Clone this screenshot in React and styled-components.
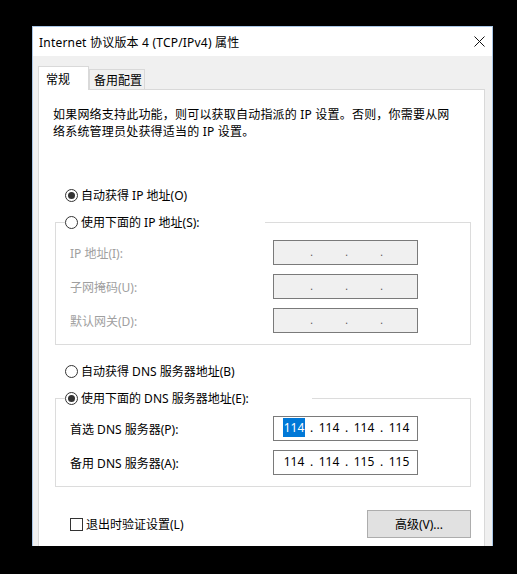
import styled, { createGlobalStyle } from 'styled-components';

const GlobalStyle = createGlobalStyle`
  html, body {
    margin: 0;
    background: #000;
  }
  body {
    font-family: "Noto Sans", "Noto Sans CJK SC", sans-serif;
    font-size: 12px;
    color: #000;
  }
`;

const ipFields = ['IP 地址(I):', '子网掩码(U):', '默认网关(D):'];

const dnsFields = [
  { label: '首选 DNS 服务器(P):', value: ['114', '114', '114', '114'], selected: 0 },
  { label: '备用 DNS 服务器(A):', value: ['114', '114', '115', '115'] },
];

function CloseIcon() {
  return (
    <svg width='11' height='11' viewBox='0 0 11 11'>
      <path d='M0.5 0.5 L10.5 10.5 M10.5 0.5 L0.5 10.5' stroke='#111' strokeWidth='1' fill='none' />
    </svg>
  );
}

function Radio({ checked, children }) {
  return (
    <RadioLabel>
      <RadioCircle $checked={checked} />
      <span>{children}</span>
    </RadioLabel>
  );
}

function IpBox({ value, disabled, selected }) {
  const parts = value || ['', '', '', ''];
  return (
    <Field $disabled={disabled}>
      {parts.map((p, i) => (
        <Segment key={i}>
          {i > 0 && <Dot $disabled={disabled}>.</Dot>}
          <Octet $selected={selected === i}>{p}</Octet>
        </Segment>
      ))}
    </Field>
  );
}

function App() {
  return (
    <Screen>
      <GlobalStyle />
      <Window>
        <TitleBar>
          <Title>Internet 协议版本 4 (TCP/IPv4) 属性</Title>
          <CloseIcon />
        </TitleBar>

        <Body>
          <Tabs>
            <Tab $active>常规</Tab>
            <Tab>备用配置</Tab>
          </Tabs>

          <Panel>
            <Description>
              如果网络支持此功能，则可以获取自动指派的 IP 设置。否则，你需要从网
              <br />
              络系统管理员处获得适当的 IP 设置。
            </Description>

            <Options>
              <OptionRow $top={45}>
                <Radio checked>自动获得 IP 地址(O)</Radio>
              </OptionRow>

              <Group $top={7}>
                <Legend $width={200}>
                  <Radio>使用下面的 IP 地址(S):</Radio>
                </Legend>
                <Rows $bottom={11}>
                  {ipFields.map((label) => (
                    <FieldRow key={label}>
                      <FieldLabel $disabled>{label}</FieldLabel>
                      <IpBox disabled />
                    </FieldRow>
                  ))}
                </Rows>
              </Group>

              <OptionRow $top={16}>
                <Radio>自动获得 DNS 服务器地址(B)</Radio>
              </OptionRow>

              <Group $top={7}>
                <Legend $width={247}>
                  <Radio checked>使用下面的 DNS 服务器地址(E):</Radio>
                </Legend>
                <Rows $bottom={11}>
                  {dnsFields.map((f) => (
                    <FieldRow key={f.label}>
                      <FieldLabel>{f.label}</FieldLabel>
                      <IpBox value={f.value} selected={f.selected} />
                    </FieldRow>
                  ))}
                </Rows>
              </Group>

              <Footer>
                <CheckLabel>
                  <CheckBox />
                  <span>退出时验证设置(L)</span>
                </CheckLabel>
                <Button>高级(V)...</Button>
              </Footer>
            </Options>
          </Panel>
        </Body>
      </Window>
    </Screen>
  );
}

export default App;

const Screen = styled.div`
  width: 517px;
  height: 574px;
  box-sizing: border-box;
  padding: 26px 0 0 32px;
  overflow: hidden;
`;

const Window = styled.div`
  width: 461px;
  height: 520px;
  box-sizing: border-box;
  border: 1px solid #a9c6e6;
  border-bottom: none;
  background: #f0f0f0;
  display: flex;
  flex-direction: column;
  overflow: hidden;
`;

const TitleBar = styled.div`
  height: 29px;
  flex: none;
  background: #fff;
  display: flex;
  align-items: center;
  justify-content: space-between;
  padding: 0 7px 0 6px;
`;

const Title = styled.span`
  letter-spacing: 0.2px;
`;

const Body = styled.div`
  flex: 1;
  display: flex;
  flex-direction: column;
  padding: 10px 7px 0 5px;
  min-height: 0;
`;

const Tabs = styled.div`
  display: flex;
  align-items: flex-end;
  height: 24px;
  margin-bottom: -1px;
  position: relative;
  z-index: 1;
`;

const Tab = styled.div`
  box-sizing: border-box;
  display: flex;
  align-items: center;
  border: 1px solid #d9d9d9;
  border-bottom: none;
  height: ${(p) => (p.$active ? '24px' : '20px')};
  margin-bottom: ${(p) => (p.$active ? '0' : '1px')};
  padding: ${(p) => (p.$active ? '0 18px 0 7px' : '0 2px 0 4px')};
  background: ${(p) => (p.$active ? '#fff' : '#f0f0f0')};
`;

const Panel = styled.div`
  flex: 1;
  background: #fff;
  border: 1px solid #d9d9d9;
  border-bottom: none;
  padding: 16px 0 0 14px;
`;

const Description = styled.div`
  line-height: 17px;
  letter-spacing: 0.2px;
  white-space: nowrap;
`;

const Options = styled.div`
  width: 416px;
  margin-left: 2px;
  display: flex;
  flex-direction: column;
`;

const OptionRow = styled.div`
  margin-top: ${(p) => p.$top}px;
  padding-left: 10px;
  height: 20px;
  display: flex;
  align-items: center;
`;

const RadioLabel = styled.label`
  display: flex;
  align-items: center;
  gap: 3px;
  white-space: nowrap;
`;

const RadioCircle = styled.span`
  box-sizing: border-box;
  width: 13px;
  height: 13px;
  border-radius: 50%;
  border: 1px solid #333;
  background: #fff;
  display: flex;
  align-items: center;
  justify-content: center;

  &::after {
    content: '';
    display: ${(p) => (p.$checked ? 'block' : 'none')};
    width: 7px;
    height: 7px;
    border-radius: 50%;
    background: #333;
  }
`;

const Group = styled.fieldset`
  margin: ${(p) => p.$top}px 0 0;
  padding: 8px 0 0 9px;
  border: 1px solid #dcdcdc;
  min-width: 0;
`;

const Legend = styled.legend`
  padding: 0;
  width: ${(p) => p.$width}px;
  height: 20px;
  display: flex;
  align-items: center;
  background: #fff;
`;

const Rows = styled.div`
  display: flex;
  flex-direction: column;
  gap: 9px;
  padding: 0 0 ${(p) => p.$bottom}px 5px;
`;

const FieldRow = styled.div`
  display: flex;
  align-items: center;
`;

const FieldLabel = styled.span`
  width: 203px;
  color: ${(p) => (p.$disabled ? '#a0a0a0' : '#000')};
  white-space: nowrap;
`;

const Field = styled.div`
  box-sizing: border-box;
  width: 145px;
  height: 25px;
  border: 1px solid #7a7a7a;
  background: ${(p) => (p.$disabled ? '#f0f0f0' : '#fff')};
  display: flex;
  align-items: center;
  padding: 0 0 2px 9px;
`;

const Segment = styled.span`
  display: flex;
  align-items: center;
`;

const Dot = styled.span`
  width: 13px;
  text-align: center;
  color: ${(p) => (p.$disabled ? '#555' : '#000')};
  font-size: ${(p) => (p.$disabled ? '10px' : '12px')};
`;

const Octet = styled.span`
  width: 22px;
  height: 19px;
  line-height: 19px;
  text-align: center;
  background: ${(p) => (p.$selected ? '#0078d7' : 'transparent')};
  color: ${(p) => (p.$selected ? '#fff' : '#000')};
`;

const Footer = styled.div`
  margin-top: 23px;
  height: 28px;
  padding-left: 15px;
  display: flex;
  align-items: center;
  justify-content: space-between;
`;

const CheckLabel = styled.label`
  display: flex;
  align-items: center;
  gap: 3px;
`;

const CheckBox = styled.span`
  box-sizing: border-box;
  width: 13px;
  height: 13px;
  border: 1px solid #333;
  background: #fff;
`;

const Button = styled.button`
  box-sizing: border-box;
  width: 104px;
  height: 28px;
  border: 1px solid #adadad;
  background: #e1e1e1;
  font: inherit;
  color: #000;
  padding: 0;
`;
